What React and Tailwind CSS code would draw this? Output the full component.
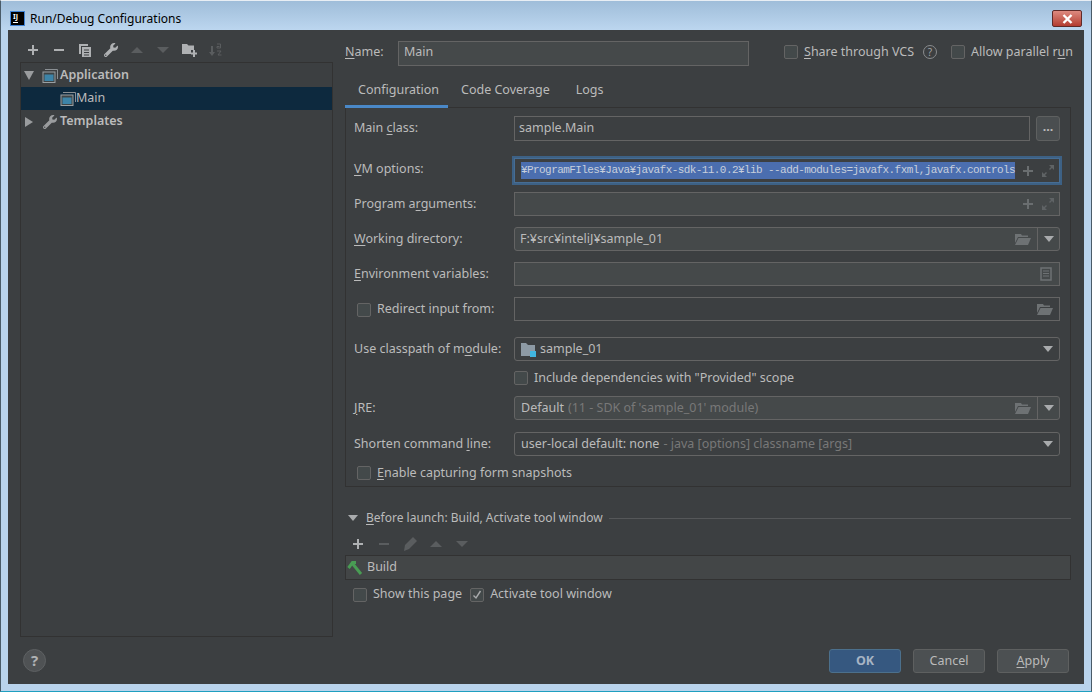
import { FaWrench } from "react-icons/fa";

const FONT = { fontFamily: '"Noto Sans", sans-serif' };

function Plus({ c = "#afb1b3", className = "" }) {
  return (
    <svg width="12" height="12" viewBox="0 0 12 12" className={className}>
      <path d="M5 1h2v4h4v2H7v4H5V7H1V5h4z" fill={c} />
    </svg>
  );
}

function Minus({ c = "#afb1b3" }) {
  return (
    <svg width="12" height="12" viewBox="0 0 12 12">
      <path d="M1 5h10v2H1z" fill={c} />
    </svg>
  );
}

function Up({ c = "#5a5d5f" }) {
  return (
    <svg width="14" height="8" viewBox="0 0 14 8">
      <path d="M7 1l6 6H1z" fill={c} />
    </svg>
  );
}

function Down({ c = "#5a5d5f" }) {
  return (
    <svg width="14" height="8" viewBox="0 0 14 8">
      <path d="M1 1h12L7 7z" fill={c} />
    </svg>
  );
}

function Caret() {
  return (
    <svg width="10" height="6" viewBox="0 0 10 6">
      <path d="M0 0h10L5 6z" fill="#a9abad" />
    </svg>
  );
}

function AppIcon() {
  return (
    <svg width="16" height="14" viewBox="0 0 16 14">
      <path d="M3 .5h12.500V10" fill="none" stroke="#8b9094" />
      <rect x="1" y="3" width="12" height="10.500" fill="#3e4446" stroke="#9aa0a3" />
      <rect x="2.500" y="5.500" width="9" height="6.500" fill="#3d84a8" />
    </svg>
  );
}

function FolderOpen() {
  return (
    <svg width="16" height="12" viewBox="0 0 16 12">
      <path d="M0 1h6l1 1.500h6V4H3L0 10z" fill="#6e7274" />
      <path d="M3.500 5H16l-3 7H0z" fill="#6e7274" />
    </svg>
  );
}

function Expand() {
  return (
    <svg width="14" height="14" viewBox="0 0 14 14">
      <path d="M8 1h5v5l-2-2-2 2-1-1 2-2zM6 13H1V8l2 2 2-2 1 1-2 2z" fill="#5f6365" />
    </svg>
  );
}

function Check({ checked }) {
  return (
    <span className="w-[14px] h-[14px] shrink-0 flex items-center justify-center rounded-[2px] border border-[#646464] bg-[#43494a]">
      {checked && (
        <svg width="10" height="10" viewBox="0 0 10 10">
          <path d="M1.500 5.500L4 8l4.500-7" fill="none" stroke="#a9abad" strokeWidth="1.400" />
        </svg>
      )}
    </span>
  );
}

function U({ children }) {
  return <span className="underline underline-offset-2">{children}</span>;
}

function Cell({ children }) {
  return <div className="w-[26px] shrink-0 flex items-center justify-center">{children}</div>;
}

function Field({ children, rounded, dark, className = "" }) {
  return (
    <div className={`flex-1 min-w-0 h-full flex items-center border border-[#646464] ${dark ? "bg-[#3c3f41]" : "bg-[#45494a]"} ${rounded ? "rounded-[3px]" : ""} ${className}`}>
      {children}
    </div>
  );
}

function Row({ label, className = "h-[24px]", labelClass = "", children }) {
  return (
    <div className={`flex items-center ${className}`}>
      <div className={`w-[160px] shrink-0 ${labelClass}`}>{label}</div>
      <div className="flex-1 min-w-0 h-full flex">{children}</div>
    </div>
  );
}

function ExpandTools() {
  return (
    <div className="ml-auto flex items-center gap-[7px] pr-[4px]">
      <Plus c="#6a6e70" />
      <Expand />
    </div>
  );
}

function DropButton() {
  return (
    <div className="w-[22px] h-full shrink-0 flex items-center justify-center border-l border-[#646464]">
      <Caret />
    </div>
  );
}

function LeftPane() {
  return (
    <div className="w-[313px] shrink-0 flex flex-col">
      <div className="h-[32px] pt-[8px] flex items-center">
        <Cell><Plus /></Cell>
        <Cell><Minus /></Cell>
        <Cell>
          <svg width="14" height="14" viewBox="0 0 14 14">
            <path d="M1 1h9v2H3v8H1z" fill="#afb1b3" />
            <path d="M4 4h9v10H4zM6 6.500v1h5v-1zM6 9v1h5V9zM6 11.500v1h5v-1z" fill="#afb1b3" fillRule="evenodd" />
          </svg>
        </Cell>
        <Cell><FaWrench className="w-[14px] h-[14px] text-[#afb1b3]" /></Cell>
        <Cell><Up /></Cell>
        <Cell><Down /></Cell>
        <Cell>
          <svg width="15" height="14" viewBox="0 0 15 14">
            <path d="M0 1h5l1.500 1.500H12V7H9v4H0z" fill="#afb1b3" />
            <path d="M11 7h2v2.500h2v2h-2V14h-2v-2.500H9v-2h2z" fill="#afb1b3" />
          </svg>
        </Cell>
        <Cell>
          <svg width="14" height="14" viewBox="0 0 14 14">
            <path d="M3 3h2v6h2l-3 4-3-4h2z" fill="#5a5d5f" />
            <path d="M9 1h3.500v4H9V3.500h2.500M9 8h4l-3 4h3.500" fill="none" stroke="#5a5d5f" />
          </svg>
        </Cell>
      </div>
      <div className="flex-1 border border-[#323232] pt-[1px] text-[#bbbbbb]">
        <div className="h-[23px] flex items-center pl-[2px] font-semibold">
          <svg width="10" height="9" viewBox="0 0 10 9" className="ml-[1px]">
            <path d="M0 0h10L5 9z" fill="#9a9c9e" />
          </svg>
          <span className="ml-[8px]"><AppIcon /></span>
          <span className="ml-[2px]">Application</span>
        </div>
        <div className="h-[23px] flex items-center pl-[39px] bg-[#0d293e]">
          <AppIcon />
          <span>Main</span>
        </div>
        <div className="h-[23px] flex items-center pl-[4px] font-semibold">
          <svg width="8" height="10" viewBox="0 0 8 10">
            <path d="M0 0l8 5-8 5z" fill="#9a9c9e" />
          </svg>
          <FaWrench className="ml-[10px] w-[14px] h-[14px] text-[#9a9c9e]" />
          <span className="ml-[3px]">Templates</span>
        </div>
      </div>
    </div>
  );
}

function ConfigPanel() {
  return (
    <div className="border border-[#323232] pt-[8px] pb-[6px] pl-[8px] pr-[10px]">
      <Row className="h-[25px]" label={<>Main <U>c</U>lass:</>}>
        <Field dark className="pl-[4px]">sample.Main</Field>
        <div className="ml-[6px] w-[24px] h-full rounded-[3px] border border-[#5e6060] bg-[#4a4e50] flex items-center justify-center pb-[2px] text-[#bbbbbb] font-bold leading-none">
          ...
        </div>
      </Row>
      <div className="mt-[17px]">
        <Row labelClass="pb-[2px]" label={<><U>V</U>M options:</>}>
          <div className="flex-1 min-w-0 flex items-center h-[25px] bg-[#3c3f41] border border-[#466d94] outline-2 outline-[#3d6185] pl-[6px]">
            <span
              className="bg-[#4b6eaf] text-[#c7cfdc] h-[17px] leading-[17px] text-[11px] tracking-[-0.575px] whitespace-nowrap"
              style={{ fontFamily: '"Liberation Mono", monospace' }}
            >
              ¥ProgramFIles¥Java¥javafx-sdk-11.0.2¥lib --add-modules=javafx.fxml,javafx.controls
            </span>
            <ExpandTools />
          </div>
        </Row>
      </div>
      <div className="mt-[10px]">
        <Row label={<>Program a<U>r</U>guments:</>}>
          <Field><ExpandTools /></Field>
        </Row>
      </div>
      <div className="mt-[11px]">
        <Row label={<><U>W</U>orking directory:</>}>
          <Field rounded className="pl-[5px]">
            F:¥src¥inteliJ¥sample_01
            <div className="ml-auto flex items-center h-full">
              <span className="mr-[6px] flex"><FolderOpen /></span>
              <DropButton />
            </div>
          </Field>
        </Row>
      </div>
      <div className="mt-[11px]">
        <Row label={<><U>E</U>nvironment variables:</>}>
          <Field>
            <svg width="12" height="14" viewBox="0 0 12 14" className="ml-auto mr-[7px]">
              <path d="M1 1h10v12H1z" fill="none" stroke="#6e7274" strokeWidth="1.500" />
              <path d="M3 4h6M3 6.500h6M3 9h6" stroke="#6e7274" />
            </svg>
          </Field>
        </Row>
      </div>
      <div className="mt-[11px]">
        <Row
          label={
            <div className="flex items-center pl-[3px] gap-[6px]">
              <span className="mt-[2px]"><Check /></span>
              Redirect input from:
            </div>
          }
        >
          <Field dark>
            <span className="ml-auto mr-[6px] flex"><FolderOpen /></span>
          </Field>
        </Row>
      </div>
      <div className="mt-[16px]">
        <Row label={<>Use classpath of m<U>o</U>dule:</>}>
          <Field rounded dark className="pl-[6px]">
            <svg width="15" height="15" viewBox="0 0 15 15">
              <path d="M0 1h5l2 2h7v7H9v4H0z" fill="#8d9aa5" />
              <rect x="9" y="9" width="6" height="6" fill="#40b6e0" />
            </svg>
            <span className="ml-[4px]">sample_01</span>
            <span className="ml-auto mr-[6px] flex"><Caret /></span>
          </Field>
        </Row>
      </div>
      <div className="mt-[9px] ml-[160px] h-[15px] flex items-center gap-[6px]">
        <Check />
        <span className="mt-[1px]">Include dependencies with "Provided" scope</span>
      </div>
      <div className="mt-[11px]">
        <Row label={<><U>J</U>RE:</>}>
          <Field rounded className="pl-[6px]">
            Default<span className="ml-[4px] text-[#787878]">(11 - SDK of 'sample_01' module)</span>
            <div className="ml-auto flex items-center h-full">
              <span className="mr-[6px] flex"><FolderOpen /></span>
              <DropButton />
            </div>
          </Field>
        </Row>
      </div>
      <div className="mt-[12px]">
        <Row label={<>Shorten command <U>l</U>ine:</>}>
          <Field rounded dark className="pl-[6px]">
            user-local default: none<span className="ml-[4px] text-[#787878]">- java [options] classname [args]</span>
            <span className="ml-auto mr-[6px] flex"><Caret /></span>
          </Field>
        </Row>
      </div>
      <div className="mt-[9px] h-[15px] pl-[3px] flex items-center gap-[6px]">
        <Check />
        <span className="mt-[1px]"><U>E</U>nable capturing form snapshots</span>
      </div>
    </div>
  );
}

function RightPane() {
  return (
    <div className="flex-1 min-w-0 flex flex-col pt-[11px]">
      <div className="h-[25px] flex items-center">
        <span className="w-[53px] shrink-0 pb-[3px]"><U>N</U>ame:</span>
        <div className="w-[351px] h-full flex items-center pl-[5px] pb-[3px] bg-[#45494a] border border-[#646464]">Main</div>
        <div className="ml-auto -mr-[1px] pb-[3px] flex items-center">
          <Check />
          <span className="ml-[6px] w-[111px] whitespace-nowrap"><U>S</U>hare through VCS</span>
          <span className="ml-[8px] w-[14px] h-[14px] rounded-full border border-[#8a8c8e] text-[10px] leading-none flex items-center justify-center text-[#a0a2a4]">?</span>
          <span className="ml-[14px]"><Check /></span>
          <span className="ml-[6px] w-[101px] whitespace-nowrap">Allow parallel r<U>u</U>n</span>
        </div>
      </div>
      <div className="mt-[12px] h-[30px] -mb-[1px] flex relative">
        <div className="w-[103px] pl-[13px] flex items-center border-b-[3px] border-[#4a88c7] pb-[3px] whitespace-nowrap">Configuration</div>
        <div className="px-[13px] flex items-center pb-[6px]">Code Coverage</div>
        <div className="px-[13px] flex items-center pb-[6px]">Logs</div>
      </div>
      <ConfigPanel />
      <div className="mt-[22px] h-[16px] flex items-center">
        <svg width="10" height="6" viewBox="0 0 10 6" className="ml-[3px] mt-[2px]">
          <path d="M0 0h10L5 6z" fill="#a9abad" />
        </svg>
        <span className="ml-[8px] mt-[2px] text-[12px] whitespace-nowrap"><U>B</U>efore launch: Build, Activate tool window</span>
        <div className="flex-1 ml-[6px] mt-[2px] h-px bg-[#555759]" />
      </div>
      <div className="h-[30px] pt-[8px] flex items-center">
        <Cell><Plus /></Cell>
        <Cell><Minus c="#5a5d5f" /></Cell>
        <Cell>
          <svg width="14" height="14" viewBox="0 0 14 14">
            <path d="M10 0l4 4-8 8-5 2 1-6z" fill="#5a5d5f" />
          </svg>
        </Cell>
        <Cell><Up /></Cell>
        <Cell><Down /></Cell>
      </div>
      <div className="h-[25px] flex items-center border border-[#323232] bg-[#434647] pl-[1px]">
        <svg width="16" height="16" viewBox="0 0 16 16">
          <path d="M1.500 8L5.500 2.500H9" fill="none" stroke="#499c54" strokeWidth="3" />
          <path d="M5 3L14 14" fill="none" stroke="#499c54" strokeWidth="3" />
        </svg>
        <span className="ml-[4px]">Build</span>
      </div>
      <div className="mt-[7px] h-[15px] pl-[8px] flex items-center">
        <Check />
        <span className="ml-[6px]">Show this page</span>
        <span className="ml-[8px]"><Check checked /></span>
        <span className="ml-[6px]">Activate tool window</span>
      </div>
    </div>
  );
}

export default function App() {
  return (
    <div
      className="w-[1092px] h-[692px] flex flex-col overflow-hidden text-[12.5px] text-[#bbbbbb] bg-[#b9d3ec] border border-t-[#e8eef4] border-x-[#4a5b68] border-b-[#1e9fc0]"
      style={FONT}
    >
      <div className="h-[29px] shrink-0 flex items-center pl-[9px] pt-[6px] bg-gradient-to-b from-[#9fbdd9] to-[#bcd6ef]">
        <div className="w-[15px] h-[15px] bg-black border border-[#3f83d6] flex flex-col leading-none pl-[2px] pt-[1px]">
          <span className="text-[7px] font-bold text-white">IJ</span>
          <span className="w-[5px] h-[1px] mt-[2px] bg-white" />
        </div>
        <span className="ml-[5px] text-[12px] text-black">Run/Debug Configurations</span>
        <div className="ml-auto mr-[9px] w-[30px] h-[17px] rounded-[2px] border border-[#5f2a28] bg-gradient-to-b from-[#dd8a80] to-[#b33b30] flex items-center justify-center">
          <svg width="11" height="10" viewBox="0 0 11 10">
            <path d="M1.500 1L9.500 9M9.500 1L1.500 9" stroke="#ffffff" strokeWidth="2.400" />
          </svg>
        </div>
      </div>
      <div className="flex-1 min-h-0 mx-[7px] mb-[7px] bg-[#3c3f41] flex flex-col">
        <div className="flex-1 min-h-0 flex pl-[12px] pr-[13px] gap-[12px]">
          <LeftPane />
          <RightPane />
        </div>
        <div className="h-[47px] shrink-0 pl-[15px] pr-[15px] pt-[12px] flex items-start">
          <div className="w-[23px] h-[23px] rounded-full bg-[#4f5254] border border-[#5e6163] flex items-center justify-center text-[15px] font-bold text-[#b0b2b4]">?</div>
          <div className="ml-auto flex gap-[12px]">
            <div className="w-[72px] h-[24px] rounded-[3px] bg-[#365880] border border-[#4c708c] flex items-center justify-center font-bold text-[#a7b4c4]">OK</div>
            <div className="w-[72px] h-[24px] rounded-[3px] bg-[#4c5052] border border-[#5e6060] flex items-center justify-center">Cancel</div>
            <div className="w-[72px] h-[24px] rounded-[3px] bg-[#4c5052] border border-[#5e6060] flex items-center justify-center"><span><U>A</U>pply</span></div>
          </div>
        </div>
      </div>
    </div>
  );
}
